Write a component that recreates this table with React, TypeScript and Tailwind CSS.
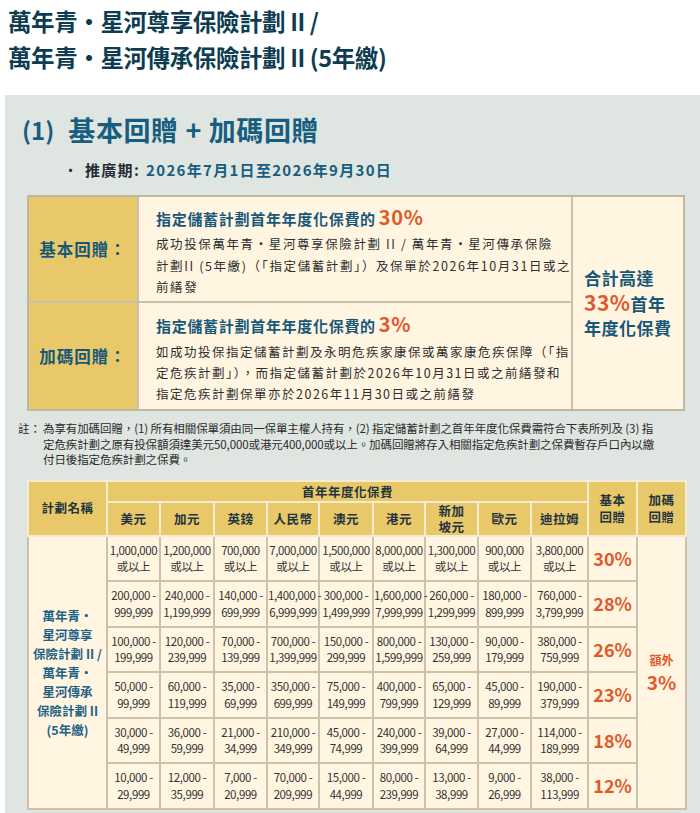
import React from "react";

const currencies: React.ReactNode[] = [
  "美元",
  "加元",
  "英鎊",
  "人民幣",
  "澳元",
  "港元",
  <>
    新加
    <br />
    坡元
  </>,
  "歐元",
  "迪拉姆",
];

const data: { cells: string[][]; pct: string }[] = [
  {
    cells: [
      ["1,000,000", "或以上"],
      ["1,200,000", "或以上"],
      ["700,000", "或以上"],
      ["7,000,000", "或以上"],
      ["1,500,000", "或以上"],
      ["8,000,000", "或以上"],
      ["1,300,000", "或以上"],
      ["900,000", "或以上"],
      ["3,800,000", "或以上"],
    ],
    pct: "30%",
  },
  {
    cells: [
      ["200,000 -", "999,999"],
      ["240,000 -", "1,199,999"],
      ["140,000 -", "699,999"],
      ["1,400,000 -", "6,999,999"],
      ["300,000 -", "1,499,999"],
      ["1,600,000 -", "7,999,999"],
      ["260,000 -", "1,299,999"],
      ["180,000 -", "899,999"],
      ["760,000 -", "3,799,999"],
    ],
    pct: "28%",
  },
  {
    cells: [
      ["100,000 -", "199,999"],
      ["120,000 -", "239,999"],
      ["70,000 -", "139,999"],
      ["700,000 -", "1,399,999"],
      ["150,000 -", "299,999"],
      ["800,000 -", "1,599,999"],
      ["130,000 -", "259,999"],
      ["90,000 -", "179,999"],
      ["380,000 -", "759,999"],
    ],
    pct: "26%",
  },
  {
    cells: [
      ["50,000 -", "99,999"],
      ["60,000 -", "119,999"],
      ["35,000 -", "69,999"],
      ["350,000 -", "699,999"],
      ["75,000 -", "149,999"],
      ["400,000 -", "799,999"],
      ["65,000 -", "129,999"],
      ["45,000 -", "89,999"],
      ["190,000 -", "379,999"],
    ],
    pct: "23%",
  },
  {
    cells: [
      ["30,000 -", "49,999"],
      ["36,000 -", "59,999"],
      ["21,000 -", "34,999"],
      ["210,000 -", "349,999"],
      ["45,000 -", "74,999"],
      ["240,000 -", "399,999"],
      ["39,000 -", "64,999"],
      ["27,000 -", "44,999"],
      ["114,000 -", "189,999"],
    ],
    pct: "18%",
  },
  {
    cells: [
      ["10,000 -", "29,999"],
      ["12,000 -", "35,999"],
      ["7,000 -", "20,999"],
      ["70,000 -", "209,999"],
      ["15,000 -", "44,999"],
      ["80,000 -", "239,999"],
      ["13,000 -", "38,999"],
      ["9,000 -", "26,999"],
      ["38,000 -", "113,999"],
    ],
    pct: "12%",
  },
];

export default function App() {
  return (
    <div className="h-[813px] w-[700px] overflow-hidden bg-white font-['Noto_Sans_CJK_TC','Noto_Sans',sans-serif]">
      <h1 className="pl-[8px] pt-[3px] text-[23.5px] font-bold leading-[36px] tracking-[-0.4px] text-[#0e3c51]">
        萬年青・星河尊享保險計劃 II /
        <br />
        萬年青・星河傳承保險計劃 II (5年繳)
      </h1>

      <div className="ml-[5px] mt-[20px] h-[718px] bg-[#dfe6e1] pt-[17px]">
        <div className="flex items-center pl-[17px] leading-[36px] text-[#175d80]">
          <span className="text-[24px] font-semibold">(1)</span>
          <span className="ml-[14px] text-[27px] font-bold tracking-[0.6px]">
            基本回贈 + 加碼回贈
          </span>
        </div>

        <div className="mt-[11px] flex items-center pl-[58px] text-[15px] leading-[22px] tracking-[1.3px]">
          <span className="w-[22px] text-[#1f2d36]">•</span>
          <span className="font-semibold text-[#1f2d36]">推廣期:</span>
          <span className="ml-[6px] font-bold text-[#175d80]">
            2026年7月1日至2026年9月30日
          </span>
        </div>

        {/* Info table */}
        <div className="ml-[22px] mt-[14px] flex w-[658px] border-2 border-[#bfb6a3] bg-[#fff5e1]">
          <div className="flex w-[542px] flex-col">
            <div className="flex h-[106px] border-b-2 border-[#c9c0ad]">
              <div className="flex w-[110px] shrink-0 items-center justify-center border-r-2 border-[#c9c0ad] bg-[#e8c868] text-[16.5px] font-bold tracking-[1px] text-[#17587a]">
                基本回贈：
              </div>
              <div className="flex-1 pl-[17px] pt-[8px]">
                <div className="flex items-baseline text-[15px] font-bold leading-[24px] tracking-[0.7px] text-[#17587a]">
                  指定儲蓄計劃首年年度化保費的
                  <span className="ml-[3px] text-[20px] text-[#e0592b]">30%</span>
                </div>
                <div className="mt-[2px] whitespace-nowrap text-[12.5px] leading-[21.5px] tracking-[1.6px] text-[#2e2e2e]">
                  成功投保萬年青・星河尊享保險計劃 II / 萬年青・星河傳承保險
                  <br />
                  計劃II (5年繳)（「指定儲蓄計劃」）及保單於2026年10月31日或之
                  <br />
                  前繕發
                </div>
              </div>
            </div>
            <div className="flex h-[106px]">
              <div className="flex w-[110px] shrink-0 items-center justify-center border-r-2 border-[#c9c0ad] bg-[#e8c868] text-[16.5px] font-bold tracking-[1px] text-[#17587a]">
                加碼回贈：
              </div>
              <div className="flex-1 pl-[17px] pt-[9px]">
                <div className="flex items-baseline text-[15px] font-bold leading-[24px] tracking-[0.7px] text-[#17587a]">
                  指定儲蓄計劃首年年度化保費的
                  <span className="ml-[3px] text-[20px] text-[#e0592b]">3%</span>
                </div>
                <div className="mt-[3px] whitespace-nowrap text-[12.5px] leading-[21px] tracking-[1.5px] text-[#2e2e2e]">
                  如成功投保指定儲蓄計劃及永明危疾家康保或萬家康危疾保障（「指
                  <br />
                  定危疾計劃」），而指定儲蓄計劃於2026年10月31日或之前繕發和
                  <br />
                  指定危疾計劃保單亦於2026年11月30日或之前繕發
                </div>
              </div>
            </div>
          </div>
          <div className="flex flex-1 items-center border-l-2 border-[#c9c0ad] pl-[11px]">
            <div className="text-[17px] font-bold leading-[24px] tracking-[0.5px] text-[#17587a]">
              合計高達
              <br />
              <span className="text-[21px] text-[#e0592b]">33%</span>首年
              <br />
              年度化保費
            </div>
          </div>
        </div>

        {/* Notes */}
        <div className="ml-[13px] mt-[10px] flex text-[11.5px] leading-[15.5px] text-[#2a2a2a]">
          <span className="w-[25px] shrink-0">註：</span>
          <div className="whitespace-nowrap tracking-[-0.1px]">
            為享有加碼回贈，(1) 所有相關保單須由同一保單主權人持有，(2) 指定儲蓄計劃之首年年度化保費需符合下表所列及 (3) 指
            <br />
            定危疾計劃之原有投保額須達美元50,000或港元400,000或以上。加碼回贈將存入相關指定危疾計劃之保費暫存戶口內以繳
            <br />
            付日後指定危疾計劃之保費。
          </div>
        </div>

        {/* Big table */}
        <table className="ml-[22px] mt-[12px] w-[658px] table-fixed border-collapse">
          <colgroup>
            <col className="w-[79px]" />
            <col className="w-[53px]" />
            <col className="w-[54px]" />
            <col className="w-[53px]" />
            <col className="w-[52px]" />
            <col className="w-[54px]" />
            <col className="w-[52px]" />
            <col className="w-[53px]" />
            <col className="w-[53px]" />
            <col className="w-[57px]" />
            <col className="w-[49px]" />
            <col className="w-[49px]" />
          </colgroup>
          <thead>
            <tr className="h-[21px]">
              <th
                rowSpan={2}
                className="border-2 border-[#f6ecd2] bg-[#e8c868] text-[12.5px] font-bold tracking-[0.5px] text-[#1f3441]"
              >
                計劃名稱
              </th>
              <th
                colSpan={9}
                className="border-2 border-[#f6ecd2] bg-[#e8c868] text-[12.5px] font-bold leading-[17px] tracking-[0.5px] text-[#1f3441]"
              >
                首年年度化保費
              </th>
              <th
                rowSpan={2}
                className="border-2 border-[#f6ecd2] bg-[#e8c868] text-[12.5px] font-bold leading-[17px] tracking-[0.5px] text-[#1f3441]"
              >
                基本
                <br />
                回贈
              </th>
              <th
                rowSpan={2}
                className="border-2 border-[#f6ecd2] bg-[#e8c868] text-[12.5px] font-bold leading-[17px] tracking-[0.5px] text-[#1f3441]"
              >
                加碼
                <br />
                回贈
              </th>
            </tr>
            <tr className="h-[33px]">
              {currencies.map((c, i) => (
                <th
                  key={i}
                  className="border-2 border-[#f6ecd2] bg-[#e8c868] p-0 text-[12.5px] font-bold leading-[16px] tracking-[0.5px] text-[#1f3441]"
                >
                  {c}
                </th>
              ))}
            </tr>
          </thead>
          <tbody>
            {data.map((row, ri) => (
              <tr key={ri} className="h-[45.5px]">
                {ri === 0 && (
                  <td
                    rowSpan={6}
                    className="border-2 border-[#cbc1ad] bg-[#fff5e1] text-center text-[12.5px] font-bold leading-[19px] text-[#1f6286]"
                  >
                    萬年青・
                    <br />
                    星河尊享
                    <br />
                    保險計劃 II /
                    <br />
                    萬年青・
                    <br />
                    星河傳承
                    <br />
                    保險計劃 II
                    <br />
                    (5年繳)
                  </td>
                )}
                {row.cells.map((c, ci) => (
                  <td
                    key={ci}
                    className="whitespace-nowrap border-2 border-[#cbc1ad] bg-[#fff5e1] p-0 text-center text-[11.5px] leading-[16.5px] tracking-[-0.4px] text-[#333333]"
                  >
                    {c[0]}
                    <br />
                    {c[1]}
                  </td>
                ))}
                <td className="border-2 border-[#cbc1ad] bg-[#fff5e1] text-center text-[18px] font-bold text-[#e0592b]">
                  {row.pct}
                </td>
                {ri === 0 && (
                  <td
                    rowSpan={6}
                    className="border-2 border-[#cbc1ad] bg-[#fff5e1] text-center font-bold text-[#e0592b]"
                  >
                    <div className="text-[12px] leading-[18px]">額外</div>
                    <div className="mt-[1px] text-[19px] leading-[24px]">3%</div>
                  </td>
                )}
              </tr>
            ))}
          </tbody>
        </table>
      </div>
    </div>
  );
}
